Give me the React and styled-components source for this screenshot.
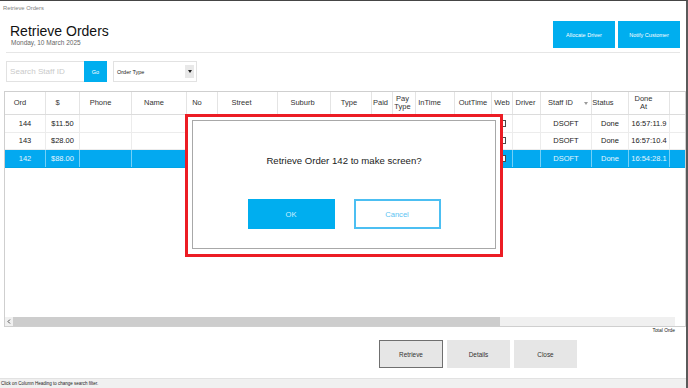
import React from 'react';
import styled, { createGlobalStyle } from 'styled-components';

const Global = createGlobalStyle`
  html, body { margin: 0; padding: 0; background: #fff; }
  body { font-family: "Liberation Sans", Arial, sans-serif; }
  * { box-sizing: border-box; }
`;

const BLUE = '#00aeef';
const COLS = [41, 34, 52, 55, 31, 60, 53, 41, 21, 23, 39, 37, 21, 28, 51, 37, 41, 15];
const HEADER_PR = [10, 10, 10, 10, 10, 12, 3, 4, 3, 3, 11, 0, 0, 2, 11, 14, 11, 0];

const Window = styled.div`
  position: relative;
  width: 688px;
  height: 388px;
  overflow: hidden;
  border-top: 1px solid #454545;
  border-right: 2px solid #5a5a5a;
  display: flex;
  flex-direction: column;
  background: #fff;
`;

const TitleBar = styled.div`
  height: 12px;
  line-height: 14px;
  padding-left: 3px;
  font-size: 5.8px;
  color: #808080;
`;

const Header = styled.header`
  display: flex;
  justify-content: space-between;
  align-items: flex-start;
  margin: 0 6px 0 6px;
  height: 40px;
  border-bottom: 1px solid #e6e6e6;
`;

const TitleBlock = styled.div`
  padding: 10px 0 0 4px;
`;

const Heading = styled.h1`
  margin: 0;
  font-size: 14px;
  line-height: 16px;
  font-weight: normal;
  color: #111;
`;

const DateLine = styled.div`
  font-size: 6.5px;
  line-height: 8px;
  color: #666;
  padding-left: 1px;
`;

const Actions = styled.div`
  display: flex;
  gap: 3px;
  margin-top: 8px;
`;

const ActionButton = styled.button`
  width: 62px;
  height: 27px;
  border: none;
  background: ${BLUE};
  color: #fff;
  font-family: inherit;
  font-size: 5.5px;
  padding: 0;
`;

const FilterRow = styled.div`
  display: flex;
  margin-top: 8px;
  padding-left: 6px;
  height: 21px;
`;

const SearchInput = styled.input`
  width: 78px;
  height: 21px;
  border: 1px solid #e2e2e2;
  border-right: none;
  font-family: inherit;
  font-size: 8.1px;
  padding: 0 3px;
  outline: none;
  &::placeholder { color: #cacaca; }
`;

const GoButton = styled.button`
  width: 23px;
  height: 21px;
  border: none;
  background: ${BLUE};
  color: #fff;
  font-family: inherit;
  font-size: 5.5px;
  padding: 0;
`;

const SelectBox = styled.div`
  margin-left: 6px;
  width: 84px;
  height: 21px;
  border: 1px solid #e2e2e2;
  display: flex;
  align-items: center;
  padding: 0 2px 0 3px;
  font-size: 5.5px;
  color: #222;
`;

const SelectArrow = styled.span`
  margin-left: auto;
  width: 9px;
  height: 13px;
  background: #e8e8e8;
  display: flex;
  align-items: center;
  justify-content: center;
`;

const Table = styled.div`
  margin: 9px 0 0 4px;
  width: 682px;
  height: 236px;
  border: 1px solid #cfcfcf;
  display: flex;
  flex-direction: column;
`;

const GridRow = styled.div`
  display: grid;
  grid-template-columns: ${COLS.map((c) => c + 'px').join(' ')};
`;

const HeaderRow = styled(GridRow)`
  height: 23px;
  border-bottom: 1px solid #dcdcdc;
`;

const HeaderCell = styled.div`
  position: relative;
  display: flex;
  flex-direction: column;
  align-items: center;
  justify-content: center;
  text-align: center;
  padding-right: ${(p) => p.$pr}px;
  border-right: ${(p) => (p.$last ? 'none' : '1px solid #e4e4e4')};
  font-size: 7.5px;
  line-height: 8px;
  color: #333;
  white-space: nowrap;
`;

const SortGlyph = styled.svg`
  position: absolute;
  right: 3px;
  top: 10px;
`;

const DataRow = styled(GridRow)`
  height: 17.5px;
  border-bottom: 1px solid ${(p) => (p.$selected ? '#00a4e6' : '#ececec')};
  background: ${(p) => (p.$selected ? '#03a9f0' : '#fff')};
  color: ${(p) => (p.$selected ? '#e3f5fd' : '#222')};
`;

const DataCell = styled.div`
  display: flex;
  align-items: center;
  justify-content: center;
  border-right: ${(p) =>
    p.$last ? 'none' : p.$selected ? '1px solid rgba(255,255,255,0.45)' : '1px solid #ececec'};
  font-size: 7.5px;
  white-space: nowrap;
  overflow: hidden;
`;

const Check = styled.span`
  width: 7px;
  height: 7px;
  border: 1px solid #4a4a4a;
  background: #fff;
`;

const BodyFill = styled.div`
  flex: 1;
`;

const HScroll = styled.div`
  display: flex;
  height: 9px;
  margin-bottom: 0;
`;

const ScrollArrow = styled.div`
  width: 8px;
  background: #f0f0f0;
  display: flex;
  align-items: center;
  justify-content: center;
`;

const ScrollThumb = styled.div`
  width: 487px;
  background: #cdcdcd;
`;

const ScrollTrack = styled.div`
  width: 175px;
  background: #f0f0f0;
`;

const TotalRow = styled.div`
  height: 7px;
  line-height: 7px;
  font-size: 4.9px;
  color: #222;
  text-align: right;
  padding-right: 11px;
  white-space: nowrap;
  overflow: hidden;
`;

const FooterButtons = styled.div`
  display: flex;
  gap: 4px;
  margin-top: 6px;
  padding-left: 379px;
`;

const FooterButton = styled.button`
  width: ${(p) => p.$w}px;
  height: 28px;
  background: #e6e6e6;
  border: 1px solid ${(p) => (p.$primary ? '#6f6f6f' : '#e6e6e6')};
  font-family: inherit;
  font-size: 6.4px;
  color: #333;
  padding: 0;
`;

const StatusBar = styled.div`
  margin-top: auto;
  height: 10px;
  border-top: 1px solid #e2e2e2;
  background: #f0f0f0;
  font-size: 4.5px;
  line-height: 9px;
  color: #222;
  padding-left: 1px;
`;

const Overlay = styled.div`
  position: absolute;
  left: 185px;
  top: 113px;
  width: 318px;
  height: 143px;
  border: 3px solid #ec1c24;
  background: #fff;
  padding: 3px 4px 5px 4px;
`;

const Dialog = styled.div`
  height: 100%;
  border: 1px solid #a8a8a8;
  display: flex;
  flex-direction: column;
  align-items: center;
  padding-top: 34px;
`;

const Message = styled.div`
  font-size: 9.6px;
  line-height: 12px;
  color: #222;
`;

const DialogButtons = styled.div`
  display: flex;
  gap: 19px;
  margin-top: 32px;
`;

const DialogButton = styled.button`
  width: 87px;
  height: 30px;
  font-family: inherit;
  font-size: 7.6px;
  padding: 0;
  background: ${(p) => (p.$primary ? BLUE : '#fff')};
  color: ${(p) => (p.$primary ? '#cdeeff' : '#5ac3f2')};
  border: ${(p) => (p.$primary ? 'none' : '2px solid #4cbff2')};
`;

const HEADERS = [
  'Ord', '$', 'Phone', 'Name', 'No', 'Street', 'Suburb', 'Type', 'Paid',
  ['Pay', 'Type'], 'InTime', 'OutTime', 'Web', 'Driver', 'Staff ID', 'Status',
  ['Done', 'At'], '',
];

const ROWS = [
  { ord: '144', amt: '$11.50', staff: 'DSOFT', status: 'Done', at: '16:57:11.9' },
  { ord: '143', amt: '$28.00', staff: 'DSOFT', status: 'Done', at: '16:57:10.4' },
  { ord: '142', amt: '$88.00', staff: 'DSOFT', status: 'Done', at: '16:54:28.1', selected: true },
];

function rowCells(r) {
  return [
    r.ord, r.amt, '', '', '', '', '', '', <Check />, '', '', '', <Check />, '',
    r.staff, r.status, r.at, '',
  ];
}

export default function App() {
  return (
    <Window>
      <Global />
      <TitleBar>Retrieve Orders</TitleBar>
      <Header>
        <TitleBlock>
          <Heading>Retrieve Orders</Heading>
          <DateLine>Monday, 10 March 2025</DateLine>
        </TitleBlock>
        <Actions>
          <ActionButton>Allocate Driver</ActionButton>
          <ActionButton>Notify Customer</ActionButton>
        </Actions>
      </Header>

      <FilterRow>
        <SearchInput placeholder="Search Staff ID" />
        <GoButton>Go</GoButton>
        <SelectBox>
          Order Type
          <SelectArrow>
            <svg width="4" height="3" viewBox="0 0 4 3">
              <path d="M0 0 L4 0 L2 3 Z" fill="#222" />
            </svg>
          </SelectArrow>
        </SelectBox>
      </FilterRow>

      <Table>
        <HeaderRow>
          {HEADERS.map((h, i) => (
            <HeaderCell key={i} $pr={HEADER_PR[i]} $last={i === HEADERS.length - 1}>
              {Array.isArray(h) ? h.map((l) => <span key={l}>{l}</span>) : h}
              {h === 'Staff ID' && (
                <SortGlyph width="4" height="3" viewBox="0 0 4 3">
                  <path d="M0 0 L4 0 L2 3 Z" fill="#9a9a9a" />
                </SortGlyph>
              )}
            </HeaderCell>
          ))}
        </HeaderRow>
        {ROWS.map((r) => (
          <DataRow key={r.ord} $selected={r.selected}>
            {rowCells(r).map((c, i) => (
              <DataCell key={i} $selected={r.selected} $last={i === COLS.length - 1}>
                {c}
              </DataCell>
            ))}
          </DataRow>
        ))}
        <BodyFill />
        <HScroll>
          <ScrollArrow>
            <svg width="4" height="5" viewBox="0 0 4 5">
              <path d="M3 0.5 L1 2.5 L3 4.5" fill="none" stroke="#555" strokeWidth="1" />
            </svg>
          </ScrollArrow>
          <ScrollThumb />
          <ScrollTrack />
        </HScroll>
      </Table>

      <TotalRow>Total Orde</TotalRow>

      <FooterButtons>
        <FooterButton $w={64} $primary>Retrieve</FooterButton>
        <FooterButton $w={63}>Details</FooterButton>
        <FooterButton $w={63}>Close</FooterButton>
      </FooterButtons>

      <StatusBar>Click on Column Heading to change search filter.</StatusBar>

      <Overlay>
        <Dialog>
          <Message>Retrieve Order 142 to make screen?</Message>
          <DialogButtons>
            <DialogButton $primary>OK</DialogButton>
            <DialogButton>Cancel</DialogButton>
          </DialogButtons>
        </Dialog>
      </Overlay>
    </Window>
  );
}
